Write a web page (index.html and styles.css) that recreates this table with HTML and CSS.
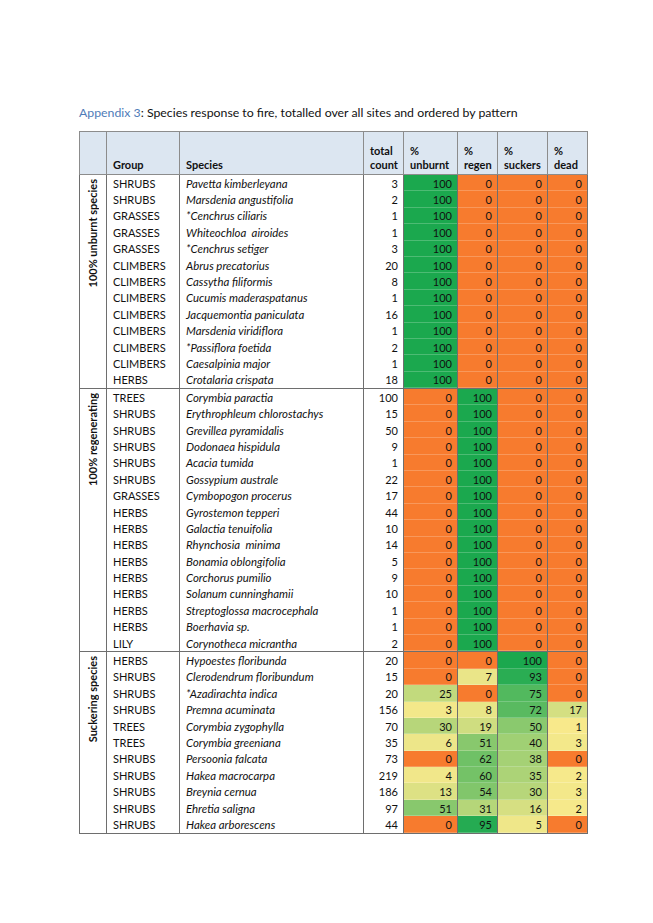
FILE: index.html
```html
<!DOCTYPE html>
<html lang="en">
<head>
<meta charset="utf-8">
<title>Appendix 3</title>
<link rel="stylesheet" href="styles.css">
</head>
<body>
<div class="page">
  <p class="title"><span class="app">Appendix 3</span>: Species response to fire, totalled over all sites and ordered by pattern</p>
  <table class="sp">
    <colgroup>
      <col class="c-lab"><col class="c-grp"><col class="c-sp"><col class="c-tot"><col class="c-unb"><col class="c-reg"><col class="c-suc"><col class="c-dead">
    </colgroup>
    <thead>
      <tr>
        <th></th>
        <th>Group</th>
        <th>Species</th>
        <th>total<br>count</th>
        <th>%<br>unburnt</th>
        <th>%<br>regen</th>
        <th>%<br>suckers</th>
        <th>%<br>dead</th>
      </tr>
    </thead>
    <tbody>
      <tr><td class="lab" rowspan="13"><span class="rot">100% unburnt species</span></td><td>SHRUBS</td><td class="s">Pavetta kimberleyana</td><td class="n">3</td><td class="n g">100</td><td class="n o">0</td><td class="n o">0</td><td class="n o">0</td></tr>
      <tr><td>SHRUBS</td><td class="s">Marsdenia angustifolia</td><td class="n">2</td><td class="n g">100</td><td class="n o">0</td><td class="n o">0</td><td class="n o">0</td></tr>
      <tr><td>GRASSES</td><td class="s">*Cenchrus ciliaris</td><td class="n">1</td><td class="n g">100</td><td class="n o">0</td><td class="n o">0</td><td class="n o">0</td></tr>
      <tr><td>GRASSES</td><td class="s">Whiteochloa&nbsp; airoides</td><td class="n">1</td><td class="n g">100</td><td class="n o">0</td><td class="n o">0</td><td class="n o">0</td></tr>
      <tr><td>GRASSES</td><td class="s">*Cenchrus setiger</td><td class="n">3</td><td class="n g">100</td><td class="n o">0</td><td class="n o">0</td><td class="n o">0</td></tr>
      <tr><td>CLIMBERS</td><td class="s">Abrus precatorius</td><td class="n">20</td><td class="n g">100</td><td class="n o">0</td><td class="n o">0</td><td class="n o">0</td></tr>
      <tr><td>CLIMBERS</td><td class="s">Cassytha filiformis</td><td class="n">8</td><td class="n g">100</td><td class="n o">0</td><td class="n o">0</td><td class="n o">0</td></tr>
      <tr><td>CLIMBERS</td><td class="s">Cucumis maderaspatanus</td><td class="n">1</td><td class="n g">100</td><td class="n o">0</td><td class="n o">0</td><td class="n o">0</td></tr>
      <tr><td>CLIMBERS</td><td class="s">Jacquemontia paniculata</td><td class="n">16</td><td class="n g">100</td><td class="n o">0</td><td class="n o">0</td><td class="n o">0</td></tr>
      <tr><td>CLIMBERS</td><td class="s">Marsdenia viridiflora</td><td class="n">1</td><td class="n g">100</td><td class="n o">0</td><td class="n o">0</td><td class="n o">0</td></tr>
      <tr><td>CLIMBERS</td><td class="s">*Passiflora foetida</td><td class="n">2</td><td class="n g">100</td><td class="n o">0</td><td class="n o">0</td><td class="n o">0</td></tr>
      <tr><td>CLIMBERS</td><td class="s">Caesalpinia major</td><td class="n">1</td><td class="n g">100</td><td class="n o">0</td><td class="n o">0</td><td class="n o">0</td></tr>
      <tr><td>HERBS</td><td class="s">Crotalaria crispata</td><td class="n">18</td><td class="n g">100</td><td class="n o">0</td><td class="n o">0</td><td class="n o">0</td></tr>
    </tbody>
    <tbody>
      <tr><td class="lab" rowspan="16"><span class="rot">100% regenerating</span></td><td>TREES</td><td class="s">Corymbia paractia</td><td class="n">100</td><td class="n o">0</td><td class="n g">100</td><td class="n o">0</td><td class="n o">0</td></tr>
      <tr><td>SHRUBS</td><td class="s">Erythrophleum chlorostachys</td><td class="n">15</td><td class="n o">0</td><td class="n g">100</td><td class="n o">0</td><td class="n o">0</td></tr>
      <tr><td>SHRUBS</td><td class="s">Grevillea pyramidalis</td><td class="n">50</td><td class="n o">0</td><td class="n g">100</td><td class="n o">0</td><td class="n o">0</td></tr>
      <tr><td>SHRUBS</td><td class="s">Dodonaea hispidula</td><td class="n">9</td><td class="n o">0</td><td class="n g">100</td><td class="n o">0</td><td class="n o">0</td></tr>
      <tr><td>SHRUBS</td><td class="s">Acacia tumida</td><td class="n">1</td><td class="n o">0</td><td class="n g">100</td><td class="n o">0</td><td class="n o">0</td></tr>
      <tr><td>SHRUBS</td><td class="s">Gossypium australe</td><td class="n">22</td><td class="n o">0</td><td class="n g">100</td><td class="n o">0</td><td class="n o">0</td></tr>
      <tr><td>GRASSES</td><td class="s">Cymbopogon procerus</td><td class="n">17</td><td class="n o">0</td><td class="n g">100</td><td class="n o">0</td><td class="n o">0</td></tr>
      <tr><td>HERBS</td><td class="s">Gyrostemon tepperi</td><td class="n">44</td><td class="n o">0</td><td class="n g">100</td><td class="n o">0</td><td class="n o">0</td></tr>
      <tr><td>HERBS</td><td class="s">Galactia tenuifolia</td><td class="n">10</td><td class="n o">0</td><td class="n g">100</td><td class="n o">0</td><td class="n o">0</td></tr>
      <tr><td>HERBS</td><td class="s">Rhynchosia&nbsp; minima</td><td class="n">14</td><td class="n o">0</td><td class="n g">100</td><td class="n o">0</td><td class="n o">0</td></tr>
      <tr><td>HERBS</td><td class="s">Bonamia oblongifolia</td><td class="n">5</td><td class="n o">0</td><td class="n g">100</td><td class="n o">0</td><td class="n o">0</td></tr>
      <tr><td>HERBS</td><td class="s">Corchorus pumilio</td><td class="n">9</td><td class="n o">0</td><td class="n g">100</td><td class="n o">0</td><td class="n o">0</td></tr>
      <tr><td>HERBS</td><td class="s">Solanum cunninghamii</td><td class="n">10</td><td class="n o">0</td><td class="n g">100</td><td class="n o">0</td><td class="n o">0</td></tr>
      <tr><td>HERBS</td><td class="s">Streptoglossa macrocephala</td><td class="n">1</td><td class="n o">0</td><td class="n g">100</td><td class="n o">0</td><td class="n o">0</td></tr>
      <tr><td>HERBS</td><td class="s">Boerhavia sp.</td><td class="n">1</td><td class="n o">0</td><td class="n g">100</td><td class="n o">0</td><td class="n o">0</td></tr>
      <tr><td>LILY</td><td class="s">Corynotheca micrantha</td><td class="n">2</td><td class="n o">0</td><td class="n g">100</td><td class="n o">0</td><td class="n o">0</td></tr>
    </tbody>
    <tbody>
      <tr><td class="lab" rowspan="11"><span class="rot">Suckering species</span></td><td>HERBS</td><td class="s">Hypoestes floribunda</td><td class="n">20</td><td class="n o">0</td><td class="n o">0</td><td class="n g">100</td><td class="n o">0</td></tr>
      <tr><td>SHRUBS</td><td class="s">Clerodendrum floribundum</td><td class="n">15</td><td class="n o">0</td><td class="n" style="background:rgb(234,229,136)">7</td><td class="n" style="background:rgb(42,173,83)">93</td><td class="n o">0</td></tr>
      <tr><td>SHRUBS</td><td class="s">*Azadirachta indica</td><td class="n">20</td><td class="n" style="background:rgb(194,218,125)">25</td><td class="n o">0</td><td class="n" style="background:rgb(82,185,94)">75</td><td class="n o">0</td></tr>
      <tr><td>SHRUBS</td><td class="s">Premna acuminata</td><td class="n">156</td><td class="n" style="background:rgb(243,232,138)">3</td><td class="n" style="background:rgb(232,229,135)">8</td><td class="n" style="background:rgb(89,186,96)">72</td><td class="n" style="background:rgb(212,223,130)">17</td></tr>
      <tr><td>TREES</td><td class="s">Corymbia zygophylla</td><td class="n">70</td><td class="n" style="background:rgb(183,214,122)">30</td><td class="n" style="background:rgb(207,221,128)">19</td><td class="n" style="background:rgb(138,201,110)">50</td><td class="n" style="background:rgb(248,233,139)">1</td></tr>
      <tr><td>TREES</td><td class="s">Corymbia greeniana</td><td class="n">35</td><td class="n" style="background:rgb(237,230,137)">6</td><td class="n" style="background:rgb(136,200,109)">51</td><td class="n" style="background:rgb(160,208,116)">40</td><td class="n" style="background:rgb(243,232,138)">3</td></tr>
      <tr><td>SHRUBS</td><td class="s">Persoonia falcata</td><td class="n">73</td><td class="n o">0</td><td class="n" style="background:rgb(111,193,102)">62</td><td class="n" style="background:rgb(165,209,117)">38</td><td class="n o">0</td></tr>
      <tr><td>SHRUBS</td><td class="s">Hakea macrocarpa</td><td class="n">219</td><td class="n" style="background:rgb(241,231,138)">4</td><td class="n" style="background:rgb(116,194,103)">60</td><td class="n" style="background:rgb(172,211,119)">35</td><td class="n" style="background:rgb(246,233,139)">2</td></tr>
      <tr><td>SHRUBS</td><td class="s">Breynia cernua</td><td class="n">186</td><td class="n" style="background:rgb(221,225,132)">13</td><td class="n" style="background:rgb(129,198,107)">54</td><td class="n" style="background:rgb(183,214,122)">30</td><td class="n" style="background:rgb(243,232,138)">3</td></tr>
      <tr><td>SHRUBS</td><td class="s">Ehretia saligna</td><td class="n">97</td><td class="n" style="background:rgb(136,200,109)">51</td><td class="n" style="background:rgb(181,214,121)">31</td><td class="n" style="background:rgb(214,223,130)">16</td><td class="n" style="background:rgb(246,233,139)">2</td></tr>
      <tr><td>SHRUBS</td><td class="s">Hakea arborescens</td><td class="n">44</td><td class="n o">0</td><td class="n" style="background:rgb(37,171,82)">95</td><td class="n" style="background:rgb(239,231,137)">5</td><td class="n o">0</td></tr>
    </tbody>
  </table>
</div>
</body>
</html>
```

FILE: styles.css
```css
html, body {
  margin: 0;
  padding: 0;
  background: #ffffff;
}

body {
  font-family: Lato, "Open Sans", "DejaVu Sans", sans-serif;
  color: #111111;
}

.page {
  padding: 105px 0 0 79px;
}

.title {
  margin: 0 0 10px;
  font-size: 12.3px;
  line-height: 16px;
  color: #111111;
}

.title .app {
  color: #4f7cb8;
}

.sp {
  border-collapse: collapse;
  table-layout: fixed;
  width: 508px;
  font-size: 11px;
  border: 1px solid #6e6e6e;
}

.c-lab { width: 27px; }
.c-grp { width: 73px; }
.c-sp { width: 184px; }
.c-tot { width: 40px; }
.c-unb { width: 54px; }
.c-reg { width: 40px; }
.c-suc { width: 50px; }
.c-dead { width: 40px; }

.sp th {
  background: #dce6f1;
  font-weight: bold;
  text-align: left;
  vertical-align: bottom;
  line-height: 14px;
  height: 40px;
  padding: 0 4px 2px 6px;
  border: 1px solid #8c8c8c;
  white-space: nowrap;
}

.sp tbody {
  border-top: 1px solid #6e6e6e;
}

.sp td {
  height: 16.4px;
  padding: 0 5px 0 6px;
  line-height: 15px;
  border-left: 1px solid #6e6e6e;
  border-right: 1px solid #6e6e6e;
  white-space: nowrap;
  overflow: hidden;
}

.sp td.s {
  font-style: italic;
  font-size: 11.4px;
}

.sp td.n {
  text-align: right;
  padding-right: 5px;
  box-shadow: inset 0 -1px 0 rgba(255, 255, 255, 0.22);
}

.sp td.o {
  background: #f77b2e;
}

.sp td.g {
  background: #1ba84e;
}

.sp td.lab {
  vertical-align: top;
  text-align: center;
  padding: 4px 0 0 0;
}

.rot {
  display: inline-block;
  writing-mode: vertical-rl;
  transform: rotate(180deg);
  font-weight: bold;
  font-size: 11px;
  line-height: 14px;
  white-space: nowrap;
}
```
